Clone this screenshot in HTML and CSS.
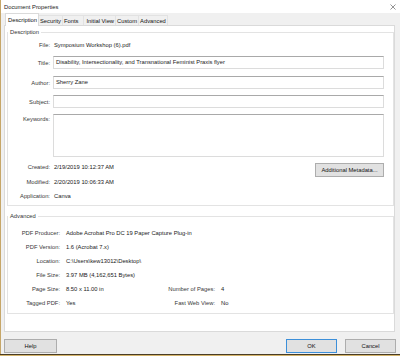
FILE: index.html
```html
<!DOCTYPE html>
<html>
<head>
<meta charset="utf-8">
<title>Document Properties</title>
<link rel="stylesheet" href="styles.css">
</head>
<body>
<div class="window">
  <div class="titlebar">
    <span class="title">Document Properties</span>
    <svg class="close" width="6" height="6" viewBox="0 0 6 6"><path d="M0.5 0.5 L5.5 5.5 M5.5 0.5 L0.5 5.5" stroke="#666" stroke-width="0.7" fill="none"/></svg>
  </div>
  <div class="tabs">
    <div class="tab active">Description</div>
    <div class="tab">Security</div>
    <div class="tab t-fonts">Fonts</div>
    <div class="tab t-init">Initial View</div>
    <div class="tab">Custom</div>
    <div class="tab">Advanced</div>
  </div>
  <div class="panel">
    <fieldset class="group group-desc">
      <legend>Description</legend>
      <div class="row row-file"><span class="lbl">File:</span><span class="val">Symposium Workshop (6).pdf</span></div>
      <div class="row row-input r-title"><span class="lbl">Title:</span><div class="input">Disability, Intersectionality, and Transnational Feminist Praxis flyer</div></div>
      <div class="row row-input r-author"><span class="lbl">Author:</span><div class="input">Sherry Zane</div></div>
      <div class="row row-input r-subject"><span class="lbl">Subject:</span><div class="input"></div></div>
      <div class="row row-keywords"><span class="lbl">Keywords:</span><div class="input textarea"></div></div>
      <div class="row row-created"><span class="lbl">Created:</span><span class="val">2/19/2019 10:12:37 AM</span><button class="btn meta">Additional Metadata...</button></div>
      <div class="row row-mod"><span class="lbl">Modified:</span><span class="val">2/20/2019 10:06:33 AM</span></div>
      <div class="row row-app"><span class="lbl">Application:</span><span class="val">Canva</span></div>
    </fieldset>
    <fieldset class="group group-adv">
      <legend>Advanced</legend>
      <div class="adv-grid">
        <span class="albl">PDF Producer:</span><span class="aval span3">Adobe Acrobat Pro DC 19 Paper Capture Plug-in</span>
        <span class="albl">PDF Version:</span><span class="aval span3">1.6 (Acrobat 7.x)</span>
        <span class="albl">Location:</span><span class="aval span3">C:\Users\kew13012\Desktop\</span>
        <span class="albl">File Size:</span><span class="aval span3">3.97 MB (4,162,651 Bytes)</span>
        <span class="albl">Page Size:</span><span class="aval">8.50 x 11.00 in</span><span class="albl">Number of Pages:</span><span class="aval">4</span>
        <span class="albl">Tagged PDF:</span><span class="aval">Yes</span><span class="albl">Fast Web View:</span><span class="aval">No</span>
      </div>
    </fieldset>
  </div>
  <div class="footer">
    <button class="btn help">Help</button>
    <div class="spacer"></div>
    <button class="btn ok">OK</button>
    <button class="btn cancel">Cancel</button>
  </div>
</div>
<div class="desk"></div>
</body>
</html>
```

FILE: styles.css
```css
html, body {
  margin: 0;
  padding: 0;
}
body {
  width: 400px;
  height: 356px;
  overflow: hidden;
  background: #f0f0f0;
  font-family: "Liberation Sans", Arial, sans-serif;
  font-size: 5.8px;
  color: #1a1a1a;
}
.window {
  height: 354px;
  box-sizing: border-box;
  border-left: 1px solid #c6a668;
  background: #f0f0f0;
}
.titlebar {
  height: 13px;
  background: #ffffff;
  display: flex;
  align-items: center;
  padding-left: 3px;
  padding-right: 4px;
}
.title {
  flex: 1;
  color: #222;
}
.close {
  display: block;
}
.tabs {
  height: 12px;
  display: flex;
  align-items: flex-end;
  padding-left: 4px;
  position: relative;
  z-index: 1;
}
.tab {
  flex: none;
  box-sizing: border-box;
  height: 10px;
  line-height: 10px;
  padding: 0 1px 0 1px;
  border: 1px solid #e2e2e2;
  border-bottom: none;
  border-left: none;
  color: #111;
  white-space: nowrap;
}
.tab.active {
  background: #ffffff;
  border-color: #dadada;
  border-left: 1px solid #dadada;
  margin-bottom: -1px;
  height: 13px;
  line-height: 13px;
  padding: 0 1px 0 2px;
}
.t-fonts { padding-right: 5px; }
.t-init { padding-left: 2px; }

.panel {
  box-sizing: border-box;
  height: 307px;
  margin: 0 5px 0 3px;
  background: #ffffff;
  border: 1px solid #dadada;
  padding: 0 0 0 2px;
}
.group {
  margin: 0;
  padding: 0;
  border: 1px solid #e3e3e3;
  min-width: 0;
}
.group legend {
  padding: 0 2px;
  margin-left: 0;
  line-height: 8px;
  color: #333;
}
.group-desc {
  margin-top: 2px;
  padding-bottom: 4px;
}
.row {
  display: flex;
  padding-right: 9px;
}
.lbl {
  width: 42px;
  flex: none;
  text-align: right;
  color: #383838;
  line-height: 10px;
}
.val {
  margin-left: 4px;
  line-height: 10px;
  color: #1a1a1a;
}
.row-file { margin-top: 4px; height: 10px; }
.row-input { height: 13px; align-items: center; }
.r-title { margin-top: 6px; }
.r-author { margin-top: 7px; }
.r-subject { margin-top: 6px; }
.input {
  box-sizing: border-box;
  flex: 1;
  height: 13px;
  margin-left: 3px;
  border: 1px solid #dcdcdc;
  border-top-color: #a9a9a9;
  background: #fff;
  padding-left: 2px;
  line-height: 10px;
  color: #1a1a1a;
  white-space: nowrap;
  overflow: hidden;
}
.row-keywords { margin-top: 6px; height: 43px; }
.textarea { height: 43px; }
.row-created { margin-top: 6px; height: 14px; align-items: flex-start; }
.row-created .lbl, .row-created .val { line-height: 9px; }
.btn {
  box-sizing: border-box;
  margin: 0;
  padding: 0;
  font-family: inherit;
  font-size: 5.8px;
  color: #111;
  background: #e1e1e1;
  border: 1px solid #adadad;
  height: 14px;
  line-height: 12px;
  text-align: center;
}
.meta {
  margin-left: auto;
  width: 69px;
}
.row-mod { height: 10px; }
.row-app { margin-top: 4px; height: 10px; }

.group-adv {
  margin-top: 6px;
  padding-bottom: 3px;
}
.adv-grid {
  margin-top: 6px;
  display: grid;
  grid-template-columns: 52px 100px 55px 1fr;
  grid-auto-rows: 14px;
  line-height: 14px;
}
.albl {
  text-align: right;
  color: #383838;
  white-space: nowrap;
}
.aval {
  padding-left: 6px;
  color: #1a1a1a;
  white-space: nowrap;
}
.span3 { grid-column: span 3; }

.footer {
  display: flex;
  margin-top: 7px;
  padding: 0 4px 0 3px;
  gap: 8px;
}
.spacer { flex: 1; }
.help { width: 53px; }
.ok {
  width: 51px;
  border: 1px solid #3c8fd9;
}
.cancel { width: 51px; }
.desk {
  height: 2px;
  box-sizing: border-box;
  border-top: 1px solid #4a3d25;
  background: #d4b46c;
}
```
